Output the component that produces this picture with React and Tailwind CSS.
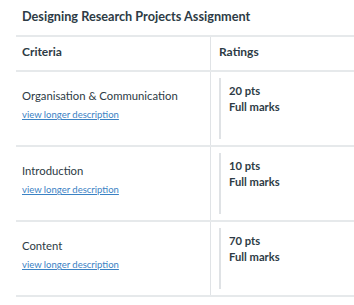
export default function App() {
  const rows = [
    { name: "Organisation & Communication", pts: "20 pts" },
    { name: "Introduction", pts: "10 pts" },
    { name: "Content", pts: "70 pts" },
  ];
  return (
    <div
      className="w-[354px] h-[305px] bg-white overflow-hidden text-[#2d3b45]"
      style={{ fontFamily: "Lato, 'Liberation Sans', sans-serif" }}
    >
      <div className="pl-[22px] pt-[7px] h-[35px] text-[12.7px] font-bold leading-[18px]">
        Designing Research Projects Assignment
      </div>
      <div className="ml-[16px] border-t-2 border-[#e6e9eb]">
        <div className="flex h-[35px] border-b-2 border-[#e6e9eb] text-[12px] font-bold">
          <div className="w-[195px] pl-[6px] pt-[6px] border-r border-[#e0e3e6]">Criteria</div>
          <div className="flex-1 pl-[8px] pt-[6px]">Ratings</div>
        </div>
        {rows.map((r) => (
          <div key={r.name} className="flex h-[75px] border-b-2 border-[#e6e9eb]">
            <div className="w-[195px] pl-[6px] pt-[15px] border-r border-[#e0e3e6]">
              <div className="text-[11.3px] leading-[18px]">{r.name}</div>
              <a href="#" className="block text-[9.5px] leading-[14px] text-[#3b82c4] underline mt-[3px]">
                view longer description
              </a>
            </div>
            <div className="flex-1 pl-[8px] pt-[6px] pb-[6px]">
              <div className="h-full border-l-2 border-[#dfe2e5] pl-[8px] pt-[5px] text-[11.2px] font-bold leading-[16px]">
                <div>{r.pts}</div>
                <div>Full marks</div>
              </div>
            </div>
          </div>
        ))}
      </div>
    </div>
  );
}
